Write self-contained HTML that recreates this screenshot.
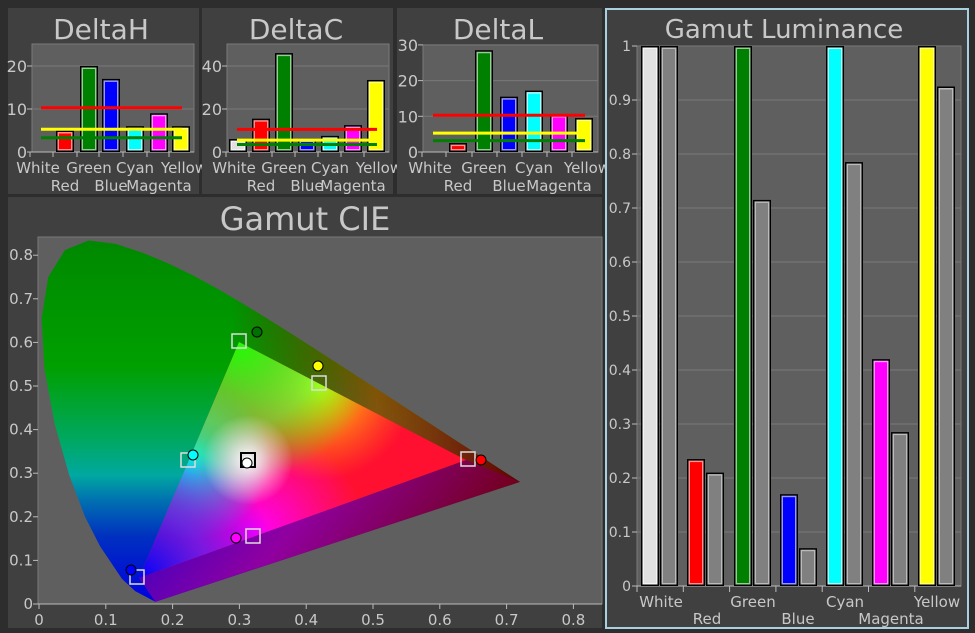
<!DOCTYPE html><html><head><meta charset="utf-8"><style>
html,body{margin:0;padding:0;background:#2d2d2d;width:975px;height:633px;overflow:hidden}
svg{display:block;font-family:"DejaVu Sans","Liberation Sans",sans-serif}
</style></head><body>
<svg id="s" width="975" height="633" viewBox="0 0 975 633" xmlns="http://www.w3.org/2000/svg">
<defs>
<linearGradient id="lv" x1="0" y1="0" x2="0" y2="1">
<stop offset="0" stop-color="#008800"/><stop offset="0.35" stop-color="#00a000"/><stop offset="0.55" stop-color="#00a860"/><stop offset="0.65" stop-color="#00a8a0"/><stop offset="0.72" stop-color="#0070b0"/><stop offset="0.82" stop-color="#0030c0"/><stop offset="1" stop-color="#0000e0"/></linearGradient>
<linearGradient id="lh" x1="0" y1="0" x2="1" y2="0">
<stop offset="0.4" stop-color="#800000" stop-opacity="0"/><stop offset="0.7" stop-color="#a04000" stop-opacity="0.8"/><stop offset="1" stop-color="#600000" stop-opacity="1"/></linearGradient>
<linearGradient id="lb" x1="0" y1="0" x2="1" y2="0.3">
<stop offset="0" stop-color="#2000d0"/><stop offset="0.5" stop-color="#9000a0"/><stop offset="1" stop-color="#700010"/></linearGradient>
<radialGradient id="rg" cx="239" cy="342" r="140" gradientUnits="userSpaceOnUse"><stop offset="0" stop-color="#20ff00"/><stop offset="0.6" stop-color="#40ff40" stop-opacity="0.6"/><stop offset="1" stop-color="#20ff00" stop-opacity="0"/></radialGradient>
<radialGradient id="rb" cx="139" cy="578" r="140" gradientUnits="userSpaceOnUse"><stop offset="0" stop-color="#0000ff"/><stop offset="0.5" stop-color="#4020ff" stop-opacity="0.7"/><stop offset="1" stop-color="#4000ff" stop-opacity="0"/></radialGradient>
<radialGradient id="rc" cx="190" cy="460" r="80" gradientUnits="userSpaceOnUse"><stop offset="0" stop-color="#00ffff"/><stop offset="1" stop-color="#00ffff" stop-opacity="0"/></radialGradient>
<radialGradient id="rm" cx="255" cy="535" r="110" gradientUnits="userSpaceOnUse"><stop offset="0" stop-color="#ff00ff"/><stop offset="1" stop-color="#ff00ff" stop-opacity="0"/></radialGradient>
<radialGradient id="ry" cx="320" cy="385" r="95" gradientUnits="userSpaceOnUse"><stop offset="0" stop-color="#ffff00"/><stop offset="1" stop-color="#ffa000" stop-opacity="0"/></radialGradient>
<radialGradient id="rw" cx="248" cy="460" r="45" gradientUnits="userSpaceOnUse"><stop offset="0" stop-color="#fff"/><stop offset="1" stop-color="#fff" stop-opacity="0"/></radialGradient>
<clipPath id="tri"><polygon points="466,460 239,342 139,578"/></clipPath>
</defs>
</svg>
<script>
var s=document.getElementById('s'),h='';
function R(x,y,w,hh,f,st,sw){h+='<rect x="'+x+'" y="'+y+'" width="'+w+'" height="'+hh+'" fill="'+f+'"'+(st?' stroke="'+st+'" stroke-width="'+(sw||1)+'"':'')+'/>';}
function L(x1,y1,x2,y2,c,w){h+='<line x1="'+x1+'" y1="'+y1+'" x2="'+x2+'" y2="'+y2+'" stroke="'+c+'" stroke-width="'+(w||1)+'"/>';}
function T(x,y,t,sz,a){h+='<text x="'+x+'" y="'+y+'" font-size="'+sz+'" fill="#c8c8c8" text-anchor="'+(a||'middle')+'">'+t+'</text>';}
var lite={'#e0e0e0':'#f4f4f4','red':'#ff9090','green':'#9c9','blue':'#99f','cyan':'#bff','magenta':'#f9f','yellow':'#ff8','#808080':'#bbb'};
function bar(x,y0,w,top,c){if(y0-top<1)return;R(x,top,w,y0-top,'#000');R(x+1.5,top+1.5,w-3,y0-top-3,lite[c]||'#ccc');R(x+3,top+3,w-6,y0-top-6,c);}
var cols=['#e0e0e0','red','green','blue','cyan','magenta','yellow'];
function delta(px,pw,title,tx,x0,x1,yt,yb,ticks,scale,bx,vals,lines){
 R(px,8,pw,186,'#404040');
 T(tx,39,title,28);
 R(x0,yt,x1-x0,yb-yt,'#5f5f5f','#7a7a7a');
 ticks.forEach(function(v){var y=yb-v*scale;if(v>0)L(x0,y,x1,y,'#787878');L(x0-5,y,x0,y,'#bbb');T(x0-5,y+6,v,16,'end');});
 L(x0,yb,x1,yb,'#bbb');
 for(var i=0;i<7;i++){bar(bx[i],yb,18,yb-vals[i]*scale,cols[i]);L(bx[i]-3,yb,bx[i]-3,yb+5,'#bbb');}
 var lc=['red','yellow','green'];
 lines.forEach(function(v,k){L(bx[0]+8,yb-v*scale,bx[6]+10,yb-v*scale,lc[k],3);});
 var c=function(i){return bx[i]+9};
 T(c(0)-4,173,'White',15);T(c(2),173,'Green',15);T(c(4),173,'Cyan',15);T(c(6)+3,173,'Yellow',15);
 T(c(1),191,'Red',15);T(c(3),191,'Blue',15);T(c(5),191,'Magenta',15);
}
R(0,0,975,633,'#2d2d2d');
delta(8,191,'DeltaH',101,32,194,44,152,[0,10,20],4.3,[33,56,80,102,126,150,172],[0,5,20,17,6,9,6],[10.3,5.3,3.3]);
delta(202,191,'DeltaC',296,227,389,44,152,[0,20,40],2.15,[229,252,275,298,321,344,367],[6,15.5,46,6,7.5,12.5,33.5],[10.5,5.5,3.5]);
delta(397,205,'DeltaL',498,423,598,45,152,[0,10,20,30],3.57,[425,449,475,500,525,550,575],[0,2.5,28.5,15.5,17.2,10.5,9.5],[10.3,5.3,3.2]);
R(8,197,594,431,'#404040');
T(305,230,'Gamut CIE',32);
R(38,237,564,367,'#5f5f5f','#7a7a7a');
function X(x){return 39+x*668}function Y(y){return 604-y*436}
[0,.1,.2,.3,.4,.5,.6,.7,.8].forEach(function(v){L(X(v),604,X(v),609,'#bbb');T(X(v),625,v,15);L(33,Y(v),38,Y(v),'#bbb');T(33,Y(v)+5,v,15,'end');});
L(38,604,602,604,'#bbb');
var loc=[[.1741,.005],[.1440,.0297],[.1241,.0578],[.0913,.1327],[.0687,.2007],[.0454,.2950],[.0235,.4127],[.0082,.5384],[.0039,.6548],[.0139,.7502],[.0389,.8120],[.0743,.8338],[.1142,.8262],[.1547,.8059],[.1929,.7816],[.2296,.7543],[.2658,.7243],[.3016,.6923],[.3373,.6589],[.3731,.6245],[.4087,.5896],[.4441,.5547],[.4788,.5202],[.5125,.4866],[.5448,.4544],[.5752,.4242],[.6029,.3965],[.6270,.3725],[.6482,.3514],[.6658,.3340],[.7200,.2800]];
var pts=loc.map(function(p){return X(p[0]).toFixed(1)+','+Y(p[1]).toFixed(1)}).join(' ');
h+='<polygon points="'+pts+'" fill="url(#lv)"/>';
h+='<polygon points="'+pts+'" fill="url(#lh)"/>';
h+='<polygon points="'+X(.1741)+','+Y(.005)+' '+X(.72)+','+Y(.28)+' 466,460 139,578" fill="url(#lb)"/>';
var rr='<rect x="130" y="330" width="350" height="260" fill="';
h+='<g clip-path="url(#tri)">'+rr+'#ff1030"/>'+rr+'url(#rm)"/>'+rr+'url(#ry)"/>'+rr+'url(#rc)"/>'+rr+'url(#rb)"/>'+rr+'url(#rg)"/>'+rr+'url(#rw)"/></g>';
function sq(x,y,st){h+='<rect x="'+(x-7)+'" y="'+(y-7)+'" width="14" height="14" fill="none" stroke="'+st+'" stroke-width="1.5"/>';}
function ci(x,y,f){h+='<circle cx="'+x+'" cy="'+y+'" r="5" fill="'+f+'" stroke="#000"/>';}
sq(239,341,'#ddd');sq(319,383,'#ddd');sq(188,460,'#ddd');sq(468,459,'#ddd');sq(253,536,'#ddd');sq(137,577,'#ddd');
h+='<rect x="241" y="453" width="14" height="14" fill="none" stroke="#000" stroke-width="2"/><rect x="243" y="455" width="10" height="10" fill="none" stroke="#ddd"/>';
ci(257,332,'#007000');ci(318,366,'#ffff00');ci(193,455,'#00ffff');ci(247,463,'#fff');ci(481,460,'#ff0000');ci(236,538,'#ff00ff');ci(131,570,'#0000ff');
R(606,9,362,619,'#404040','#a8d0e0',2);
T(784,38,'Gamut Luminance',26);
R(637,46,324,540,'#5f5f5f','#7a7a7a');
for(var i=0;i<=10;i++){var v=i/10,y=586-v*540;if(i>0&&i<10)L(637,y,961,y,'#787878');L(632,y,637,y,'#bbb');T(631,y+5,i==0?'0':i==10?'1':v.toFixed(1),14,'end');}
L(637,586,961,586,'#bbb');
var bx=[641,687,734,780,826,872,918],lv=[[1,1],[.235,.21],[1,.715],[.17,.07],[1,.785],[.42,.285],[1,.925]];
for(var i=0;i<7;i++){bar(bx[i],586,18,586-lv[i][0]*540,cols[i]);bar(bx[i]+19,586,18,586-lv[i][1]*540,'#808080');L(637+i*46.3,586,637+i*46.3,592,'#bbb');}
T(661,607,'White',15);T(753,607,'Green',15);T(845,607,'Cyan',15);T(937,607,'Yellow',15);
T(707,624,'Red',15);T(798,624,'Blue',15);T(891,624,'Magenta',15);
s.innerHTML+=h;
</script>
</body></html>
